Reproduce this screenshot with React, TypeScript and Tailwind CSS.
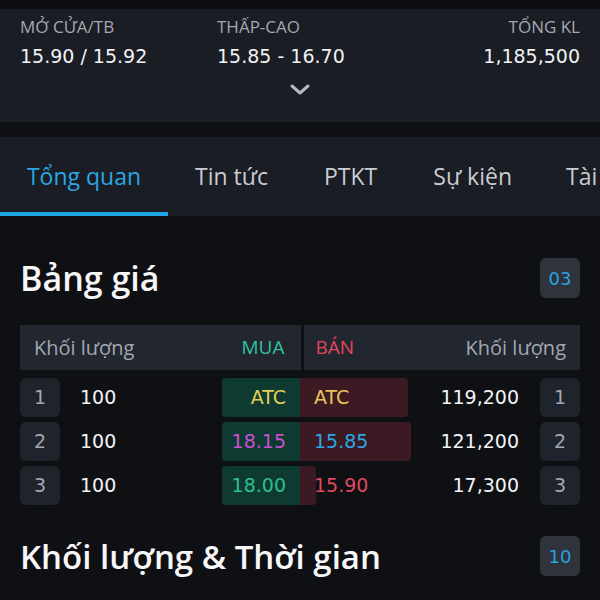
import React from "react";

const rows = [
  { i: 1, bv: "100", bp: "ATC", bc: "text-[#e3cf55]", sp: "ATC", sc: "text-[#e8c45a]", sw: 108, sv: "119,200" },
  { i: 2, bv: "100", bp: "18.15", bc: "text-[#c94fd3]", sp: "15.85", sc: "text-[#2ea6e3]", sw: 111, sv: "121,200" },
  { i: 3, bv: "100", bp: "18.00", bc: "text-[#2ebf8e]", sp: "15.90", sc: "text-[#e0485f]", sw: 16, sv: "17,300" },
];

export default function App() {
  const num = { fontFamily: "'DejaVu Sans', Roboto, sans-serif" };
  return (
    <div className="w-[600px] h-[600px] overflow-hidden bg-[#0e1014] text-white" style={{ fontFamily: "'Open Sans', 'Noto Sans', sans-serif" }}>
      <div className="h-[9px] bg-[#0c0e12]" />
      {/* Header stats */}
      <div className="h-[113px] bg-[#1a1d24] px-5 pt-[8px] flex flex-col">
        <div className="flex">
          <div className="w-[197px]">
            <div className="text-[17px] leading-[20px] text-[#a3a8b3]">MỞ CỬA/TB</div>
            <div className="text-[19px] leading-[24px] mt-[7px] text-[#f1f2f4]" style={num}>15.90 / 15.92</div>
          </div>
          <div className="flex-1">
            <div className="text-[17px] leading-[20px] text-[#a3a8b3]">THẤP-CAO</div>
            <div className="text-[19px] leading-[24px] mt-[7px] text-[#f1f2f4]" style={num}>15.85 - 16.70</div>
          </div>
          <div className="text-right">
            <div className="text-[17px] leading-[20px] text-[#a3a8b3]">TỔNG KL</div>
            <div className="text-[19px] leading-[24px] mt-[7px] text-[#f1f2f4]" style={num}>1,185,500</div>
          </div>
        </div>
        <div className="flex justify-center mt-[15px]">
          <svg width="22" height="13" viewBox="0 0 22 13" fill="none">
            <path d="M3 3 L11 10 L19 3" stroke="#b4b8c0" strokeWidth="3" strokeLinecap="round" strokeLinejoin="round" />
          </svg>
        </div>
      </div>
      <div className="h-[15px] bg-[#0e1014]" />
      {/* Tabs */}
      <div className="h-[79px] bg-[#1a1d24] flex whitespace-nowrap overflow-hidden">
        <div className="relative shrink-0 w-[168px] flex items-center justify-center text-[23px] text-[#2ba6e3]">
          Tổng quan
          <div className="absolute left-0 right-0 bottom-0 h-[4px] bg-[#1fa7e6]" />
        </div>
        <div className="shrink-0 px-[27px] flex items-center text-[23px] text-[#c9ccd2]">Tin tức</div>
        <div className="shrink-0 px-[29px] flex items-center text-[23px] text-[#c9ccd2]">PTKT</div>
        <div className="shrink-0 px-[27px] flex items-center text-[23px] text-[#c9ccd2]">Sự kiện</div>
        <div className="shrink-0 px-[27px] flex items-center text-[23px] text-[#c9ccd2]">Tài</div>
      </div>
      {/* Bảng giá */}
      <div className="px-5 pt-[42px]">
        <div className="flex items-center justify-between h-[40px]">
          <div className="text-[34px] font-semibold leading-none text-[#f7f7f8]">Bảng giá</div>
          <div className="w-[40px] h-[40px] rounded-md bg-[#2e333c] flex items-center justify-center text-[18px] text-[#2ba3e0]" style={num}>03</div>
        </div>
        <div className="mt-[27px] h-[45px] flex text-[20px]">
          <div className="flex-1 bg-[#22262e] flex items-center justify-between pl-[14px] pr-[16px]">
            <span className="text-[#a3a8b3]">Khối lượng</span>
            <span className="text-[19px] text-[#2ec4a2]">MUA</span>
          </div>
          <div className="w-[3px]" />
          <div className="flex-1 bg-[#22262e] flex items-center justify-between pl-[12px] pr-[14px]">
            <span className="text-[19px] text-[#e0485f]">BÁN</span>
            <span className="text-[#a3a8b3]">Khối lượng</span>
          </div>
        </div>
        <div className="mt-[8px] flex flex-col gap-[5px]" style={num}>
          {rows.map((r) => (
            <div key={r.i} className="h-[39px] flex items-stretch text-[19px]">
              <div className="w-[40px] rounded-md bg-[#1f232b] flex items-center justify-center text-[#a3a8b3]">{r.i}</div>
              <div className="w-[162px] flex items-center pl-[20px] text-[#f3f4f6]">{r.bv}</div>
              <div className="w-[78px] rounded-l bg-[#0f3a32] flex items-center justify-end pr-[14px]">
                <span className={r.bc}>{r.bp}</span>
              </div>
              <div className="relative w-[240px] flex items-center">
                <div className="absolute left-0 top-0 bottom-0 rounded-r bg-[#3b1a23]" style={{ width: r.sw }} />
                <span className={`relative pl-[14px] ${r.sc}`}>{r.sp}</span>
                <span className="relative ml-auto pr-[21px] text-[#f3f4f6]">{r.sv}</span>
              </div>
              <div className="w-[40px] rounded-md bg-[#1f232b] flex items-center justify-center text-[#a3a8b3]">{r.i}</div>
            </div>
          ))}
        </div>
        <div className="mt-[31px] flex items-center justify-between h-[40px]">
          <div className="text-[33px] font-semibold leading-none text-[#f7f7f8] whitespace-nowrap">Khối lượng &amp; Thời gian</div>
          <div className="w-[40px] h-[40px] rounded-md bg-[#2e333c] flex items-center justify-center text-[18px] text-[#2ba3e0]" style={num}>10</div>
        </div>
      </div>
    </div>
  );
}
